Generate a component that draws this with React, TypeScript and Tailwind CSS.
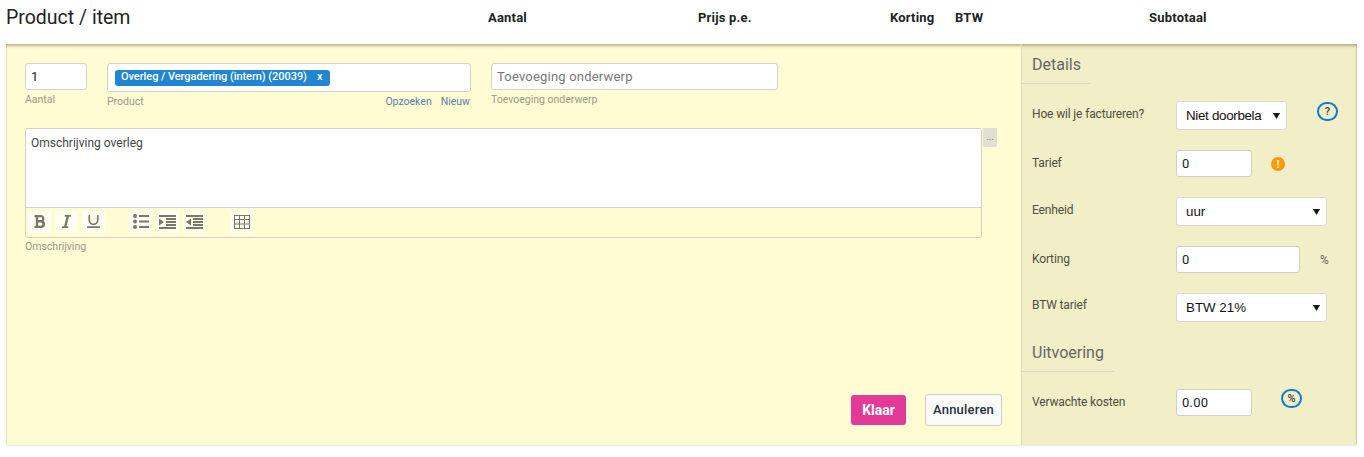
import { FaBold, FaItalic } from "react-icons/fa";
import { Underline } from "lucide-react";

const columns = [
  { label: "Aantal", width: "w-[210px]" },
  { label: "Prijs p.e.", width: "w-[192px]" },
  { label: "Korting", width: "w-[65px]" },
  { label: "BTW", width: "w-[194px]" },
  { label: "Subtotaal", width: "w-[150px]" },
];

function Caption({ children, className = "" }: { children: React.ReactNode; className?: string }) {
  return <div className={`text-[10.5px] leading-[14px] text-[#9a9a8e] ${className}`}>{children}</div>;
}

function TextBox({ value, width, muted, className = "" }: { value: string; width: string; muted?: boolean; className?: string }) {
  return (
    <div className={`flex h-[27px] items-center rounded-[3px] border border-[#d4d1c4] bg-white px-[5px] text-[13px] tracking-[0.2px] ${width} ${muted ? "text-[#777]" : "text-[#222]"} ${className}`}>
      {value}
    </div>
  );
}

function SelectBox({ value, width, tight }: { value: string; width: string; tight?: boolean }) {
  return (
    <div className={`flex h-[29px] items-center justify-between rounded-[3px] border border-[#dcd9cb] bg-white pl-[9px] pr-[6px] font-['Liberation_Sans',sans-serif] text-[13.33px] text-[#111] ${width}`}>
      <span className={`whitespace-nowrap ${tight ? "tracking-[-0.3px]" : ""}`}>{value}</span>
      <svg width="7" height="6" viewBox="0 0 7 6" className="shrink-0">
        <path d="M0 0h7L3.5 6z" fill="#111" />
      </svg>
    </div>
  );
}

function SideRow({ label, children, height = "h-[48px]", labelTop = "pt-[5px]" }: { label: string; children: React.ReactNode; height?: string; labelTop?: string }) {
  return (
    <div className={`flex items-start pl-[10px] ${height}`}>
      <div className={`w-[144px] text-[12px] font-normal leading-[16px] tracking-[-0.15px] text-[#4f4d45] ${labelTop}`}>{label}</div>
      {children}
    </div>
  );
}

function ToolButton({ children, className = "" }: { children: React.ReactNode; className?: string }) {
  return <span className={`flex h-[22px] w-[23px] items-center justify-center rounded-[2px] bg-[#fffdf0] text-[#7b7865] ${className}`}>{children}</span>;
}

function ListIcon() {
  return (
    <svg width="16" height="15" viewBox="0 0 16 15" fill="#7b7865">
      <circle cx="2" cy="2" r="2" />
      <circle cx="2" cy="7.5" r="2" />
      <circle cx="2" cy="13" r="2" />
      <rect x="6" y="1" width="10" height="2" />
      <rect x="6" y="6.5" width="10" height="2" />
      <rect x="6" y="12" width="10" height="2" />
    </svg>
  );
}

function IndentIcon({ out }: { out?: boolean }) {
  return (
    <svg width="17" height="14" viewBox="0 0 17 14" fill="#7b7865">
      <rect x="0" y="0" width="17" height="2" />
      <rect x="7" y="3" width="10" height="2" />
      <rect x="7" y="6" width="10" height="2" />
      <rect x="7" y="9" width="10" height="2" />
      <rect x="0" y="12" width="17" height="2" />
      {out ? <path d="M5 3.5v7L0 7z" /> : <path d="M0 3.5v7L5 7z" />}
    </svg>
  );
}

function TableIcon() {
  return (
    <svg width="16" height="14" viewBox="0 0 16 14" fill="none" stroke="#7b7865" strokeWidth="1">
      <rect x="0.5" y="0.5" width="15" height="13" />
      <path d="M0.5 4.5h15M0.5 9h15M5.5 0.5v13M10.5 0.5v13" />
    </svg>
  );
}

function RoundIcon({ children }: { children: React.ReactNode }) {
  return (
    <span className="flex h-[19px] w-[21px] items-center justify-center rounded-full border-2 border-[#0b7ed0] text-[11px] font-medium leading-none text-[#444]">
      {children}
    </span>
  );
}

export default function App() {
  return (
    <div className="h-[457px] w-[1364px] overflow-hidden bg-white font-['Roboto',sans-serif]">
      <header className="flex h-[44px] items-center px-[6px] pb-[8px]">
        <h1 className="w-[482px] text-[19.5px] font-normal leading-none text-[#222]">Product / item</h1>
        {columns.map((c) => (
          <div key={c.label} className={`${c.width} text-[13px] font-bold tracking-[0.2px] text-[#222]`}>
            {c.label}
          </div>
        ))}
      </header>

      <div className="mx-[6px] flex h-[401px] w-[1351px] rounded-b-[3px] shadow-[0_1px_2px_rgba(0,0,0,0.1)]">
        <main className="flex w-[1015px] flex-col bg-[#fffbd3] pl-[19px] pr-[19px] pt-[19px] shadow-[inset_0_4px_3px_-2px_rgba(120,115,60,0.5),inset_1px_0_1px_rgba(150,145,90,0.2)]">
          <div className="flex items-start">
            <div className="mr-[20px]">
              <TextBox value="1" width="w-[62px]" />
              <Caption className="mt-[3px]">Aantal</Caption>
            </div>
            <div className="mr-[20px] w-[364px]">
              <div className="flex h-[29px] items-center rounded-[3px] border border-[#d4d1c4] bg-white pl-[7px]">
                <span className="flex h-[16px] items-center rounded-[3px] bg-[#2285d0] pl-[6px] pr-[8px] text-[11px] font-medium tracking-[-0.05px] text-white">
                  Overleg / Vergadering (intern) (20039)
                  <span className="ml-[10px]">x</span>
                </span>
              </div>
              <div className="mt-[3px] flex justify-between">
                <Caption>Product</Caption>
                <div className="flex gap-[9px] pr-[1px] text-[10.5px] leading-[14px] text-[#5b7fa8]">
                  <span>Opzoeken</span>
                  <span>Nieuw</span>
                </div>
              </div>
            </div>
            <div>
              <TextBox value="Toevoeging onderwerp" width="w-[287px]" muted />
              <Caption className="mt-[3px]">Toevoeging onderwerp</Caption>
            </div>
          </div>

          <div className="mt-[19px] flex items-start">
            <div className="h-[110px] w-[957px] overflow-hidden rounded-[3px] border border-[#d4d1c4]">
              <div className="h-[78px] bg-white px-[5px] pt-[6px] text-[12px] leading-[16px] text-[#444]">Omschrijving overleg</div>
              <div className="flex h-[30px] items-center border-t border-[#d4d1c4] pb-[2px] pl-[2px]">
                <ToolButton><FaBold size={15} /></ToolButton>
                <ToolButton className="ml-[4px]"><FaItalic size={15} /></ToolButton>
                <ToolButton className="ml-[4px]"><Underline size={17} strokeWidth={2.4} /></ToolButton>
                <ToolButton className="ml-[24px]"><ListIcon /></ToolButton>
                <ToolButton className="ml-[4px]"><IndentIcon /></ToolButton>
                <ToolButton className="ml-[4px]"><IndentIcon out /></ToolButton>
                <ToolButton className="ml-[24px]"><TableIcon /></ToolButton>
              </div>
            </div>
            <div className="ml-[1px] flex h-[19px] w-[14px] items-center justify-center bg-[#e1dfd2] text-[9px] leading-none text-[#555]">...</div>
          </div>
          <Caption className="mt-[2px]">Omschrijving</Caption>

          <div className="mt-[140px] flex items-center justify-end gap-[19px]">
            <button className="h-[30px] w-[55px] rounded-[3px] bg-[#e23a97] text-[14px] font-bold text-white">Klaar</button>
            <button className="h-[32px] w-[77px] rounded-[3px] border border-[#cfcdc5] bg-[#fbfbfa] text-[13px] font-medium tracking-[0.2px] text-[#263342]">Annuleren</button>
          </div>
        </main>

        <aside className="flex-1 rounded-br-[3px] border-l border-[#dedbc0] bg-[#f2eec7] shadow-[inset_0_4px_3px_-2px_rgba(120,115,60,0.5),inset_-2px_0_2px_-1px_rgba(120,115,60,0.25)]">
          <h2 className="w-[69px] border-b border-[#dad7c0] pb-[8px] pl-[10px] pt-[10px] text-[16px] font-normal leading-[21px] text-[#666]">Details</h2>
          <div className="mt-[17px]">
            <SideRow label="Hoe wil je factureren?">
              <SelectBox value="Niet doorbela" width="w-[111px]" tight />
              <span className="ml-[30px] mt-[1px]"><RoundIcon>?</RoundIcon></span>
            </SideRow>
            <SideRow label="Tarief" labelTop="pt-[6px]">
              <TextBox value="0" width="w-[76px]" className="mt-[1px]" />
              <span className="ml-[19px] mt-[8px] flex h-[14px] w-[14px] items-center justify-center rounded-full bg-[#f79a0e] text-[11px] font-bold leading-none text-[#fdf3cf]">!</span>
            </SideRow>
            <SideRow label="Eenheid">
              <SelectBox value="uur" width="w-[151px]" />
            </SideRow>
            <SideRow label="Korting" labelTop="pt-[6px]">
              <TextBox value="0" width="w-[124px]" className="mt-[1px]" />
              <span className="ml-[20px] mt-[6px] text-[12px] text-[#666]">%</span>
            </SideRow>
            <SideRow label="BTW tarief" height="h-[40px]" labelTop="pt-[4px]">
              <SelectBox value="BTW 21%" width="w-[151px]" />
            </SideRow>
          </div>
          <h2 className="mt-[9px] w-[92px] border-b border-[#dad7c0] pb-[8px] pl-[10px] text-[16px] font-normal leading-[21px] text-[#666]">Uitvoering</h2>
          <div className="mt-[17px]">
            <SideRow label="Verwachte kosten">
              <TextBox value="0.00" width="w-[76px]" />
              <span className="ml-[29px]"><RoundIcon>%</RoundIcon></span>
            </SideRow>
          </div>
        </aside>
      </div>
    </div>
  );
}
